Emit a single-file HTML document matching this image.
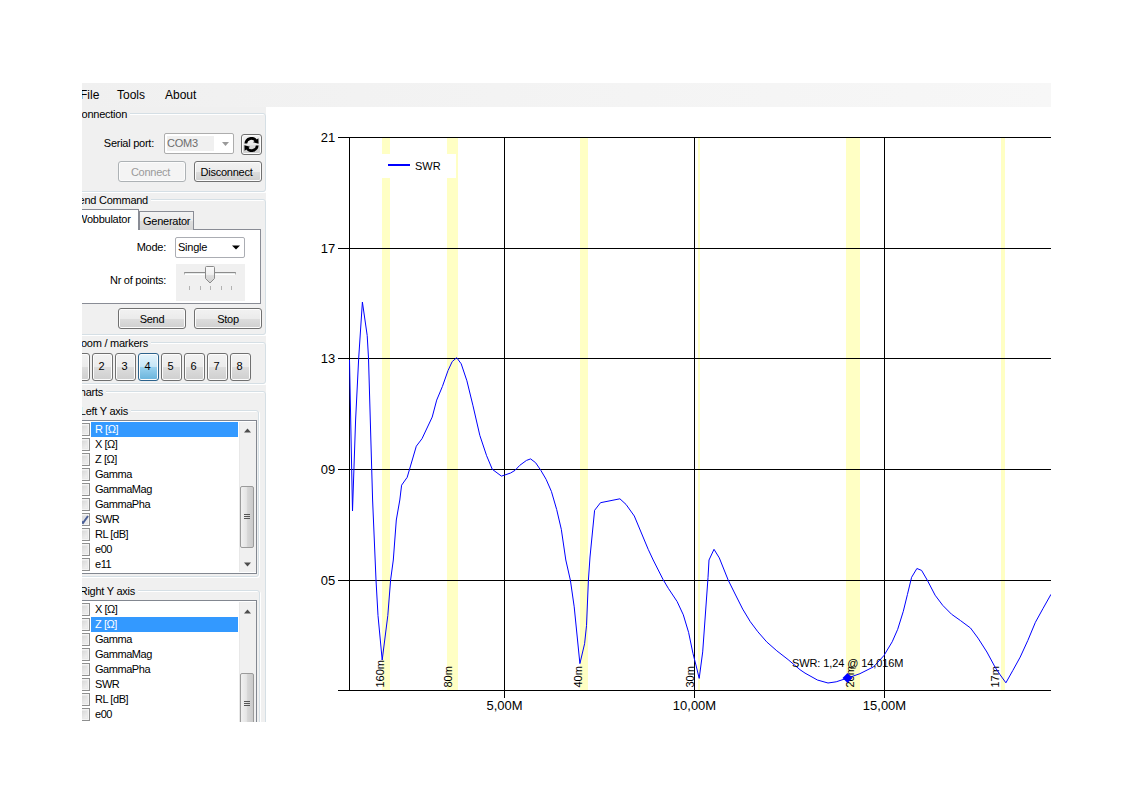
<!DOCTYPE html>
<html><head><meta charset="utf-8">
<style>
*{box-sizing:border-box;margin:0;padding:0}
html,body{width:1122px;height:793px;overflow:hidden;background:#fff;font-family:"Liberation Sans", sans-serif;color:#000}
.abs{position:absolute}
.chart{position:absolute;left:0;top:0}
#menu{position:absolute;left:82px;top:83px;width:969px;height:24px;background:linear-gradient(to right,#f0f0f0,#f7f7f7);overflow:hidden;font-size:12px}
#menu span{position:absolute;top:5px}
#panel{position:absolute;left:82px;top:107px;width:184px;height:615px;background:#f0f0f0;overflow:hidden}
#in{position:absolute;left:-82px;top:-107px;width:1122px;height:793px;font-size:11px;letter-spacing:-0.25px}
.t{position:absolute;white-space:nowrap;line-height:13px}
.r{text-align:right}
.gb{position:absolute;border:1px solid #d5dfe5;border-radius:3px;box-shadow:inset 1px 1px 0 #fff, 1px 1px 0 #fff}
.gl{position:absolute;background:#f0f0f0;padding:0 3px 0 0;white-space:nowrap;line-height:13px;text-align:right}
.btn{position:absolute;border:1px solid #707070;border-radius:3px;background:linear-gradient(#f2f2f2 0%,#ebebeb 50%,#dddddd 51%,#cfcfcf 100%);box-shadow:inset 0 0 0 1px #fcfcfc;text-align:center;line-height:18px}
.dis{border-color:#adb2b5;background:#f4f4f4;color:#9a9a9a}
.lb{position:absolute;background:#fff;border:1px solid #828790}
.row{position:absolute;left:0;height:15px;width:200px;line-height:15px}
.cb{position:absolute;width:13px;height:13px;border:1px solid #8e8f8f;background:linear-gradient(135deg,#cdcdcd,#f7f7f7);box-shadow:inset 0 0 0 1px #f4f4f4,inset 0 0 0 2px #e8e8e8}
.sel{background:#3399ff;color:#fff}
.zb{position:absolute;top:353px;width:21px;height:28px;border:1px solid #707070;border-radius:3px;background:linear-gradient(#f2f2f2 0%,#ebebeb 50%,#dddddd 51%,#cfcfcf 100%);box-shadow:inset 0 0 0 1px #fcfcfc;text-align:center;line-height:24px;font-size:11px;letter-spacing:0;padding-right:2px}
.zb.on{border-color:#2c628b;background:linear-gradient(#e5f4fc 0%,#c4e5f6 50%,#98d1ef 51%,#68b3db 100%)}
.sb{position:absolute;background:#f0f0f0;border-left:1px solid #e8e8e8}
</style></head><body>
<svg class="chart" width="1122" height="793" viewBox="0 0 1122 793">
<defs><clipPath id="pa"><rect x="349" y="137" width="702" height="553"/></clipPath></defs>
<rect x="382" y="137" width="8" height="553" fill="#ffffc4"/>
<rect x="447" y="137" width="11" height="553" fill="#ffffc4"/>
<rect x="580" y="137" width="8" height="553" fill="#ffffc4"/>
<rect x="698" y="137" width="2" height="553" fill="#ffffc4"/>
<rect x="846" y="137" width="14" height="553" fill="#ffffc4"/>
<rect x="1001" y="137" width="4" height="553" fill="#ffffc4"/>
<rect x="382" y="154" width="74" height="24" fill="#fff"/>
<rect x="388" y="164" width="22" height="2" fill="#0000ff"/>
<text x="415" y="169.5" font-family='"Liberation Sans", sans-serif' font-size="11" fill="#000">SWR</text>
<rect x="338" y="137" width="713" height="1" fill="#000"/>
<rect x="338" y="248" width="713" height="1" fill="#000"/>
<rect x="338" y="358" width="713" height="1" fill="#000"/>
<rect x="338" y="469" width="713" height="1" fill="#000"/>
<rect x="338" y="580" width="713" height="1" fill="#000"/>
<rect x="338" y="690" width="713" height="1" fill="#000"/>
<rect x="349" y="137" width="1" height="553" fill="#000"/>
<rect x="504" y="137" width="1" height="561" fill="#000"/>
<rect x="694" y="137" width="1" height="561" fill="#000"/>
<rect x="884" y="137" width="1" height="561" fill="#000"/>
<text x="335.3" y="141.5" text-anchor="end" font-family='"Liberation Sans", sans-serif' font-size="13" fill="#000">21</text>
<text x="335.3" y="252.5" text-anchor="end" font-family='"Liberation Sans", sans-serif' font-size="13" fill="#000">17</text>
<text x="335.3" y="362.5" text-anchor="end" font-family='"Liberation Sans", sans-serif' font-size="13" fill="#000">13</text>
<text x="335.3" y="473.5" text-anchor="end" font-family='"Liberation Sans", sans-serif' font-size="13" fill="#000">09</text>
<text x="335.3" y="584.5" text-anchor="end" font-family='"Liberation Sans", sans-serif' font-size="13" fill="#000">05</text>
<text x="504.5" y="710" text-anchor="middle" font-family='"Liberation Sans", sans-serif' font-size="13" fill="#000">5,00M</text>
<text x="694.5" y="710" text-anchor="middle" font-family='"Liberation Sans", sans-serif' font-size="13" fill="#000">10,00M</text>
<text x="884.5" y="710" text-anchor="middle" font-family='"Liberation Sans", sans-serif' font-size="13" fill="#000">15,00M</text>
<text transform="translate(384.2,687.5) rotate(-90)" font-family='"Liberation Sans", sans-serif' font-size="11" fill="#000">160m</text>
<text transform="translate(452.2,687.5) rotate(-90)" font-family='"Liberation Sans", sans-serif' font-size="11" fill="#000">80m</text>
<text transform="translate(582.2,687.5) rotate(-90)" font-family='"Liberation Sans", sans-serif' font-size="11" fill="#000">40m</text>
<text transform="translate(694.2,687.5) rotate(-90)" font-family='"Liberation Sans", sans-serif' font-size="11" fill="#000">30m</text>
<text transform="translate(854.2,687.5) rotate(-90)" font-family='"Liberation Sans", sans-serif' font-size="11" fill="#000">20m</text>
<text transform="translate(999.2,687.5) rotate(-90)" font-family='"Liberation Sans", sans-serif' font-size="11" fill="#000">17m</text>
<polyline clip-path="url(#pa)" points="349.5,360 352.5,511 355.6,420 358.7,358 362.4,302 367.2,335.5 368.5,358 372.6,500 376,580 378,615.6 382.2,660 387.8,615.6 390.6,580 393.3,560 396.3,520 399.8,500 401.6,485.2 407.2,477.3 416.3,446.2 422,438.7 432.2,417.1 436.7,400.1 442.4,386.5 448,370.6 452.2,361.6 456.7,357.7 461.2,363.8 466.9,380.8 473,405.8 479.8,435.3 486.6,455.7 492.3,469.3 501.4,476.1 504.5,475.1 510.6,473 515.1,470.3 519.7,465.4 526.5,460.4 530.6,458.9 535.6,462.7 540.8,470.3 546.1,479.3 551.4,491.4 556.7,509.6 561.3,529.3 565.8,560 570.4,580.3 574.2,606.8 579.9,663.6 584.6,643.7 586.5,625.7 588.4,580.3 590,557 594.6,510.3 600.5,502.7 619.9,498.8 626,504.4 634.3,516 648.2,549.3 653.2,560 663,579.4 668.3,588.3 677.1,601.5 683.3,614.8 688.6,632.4 693,653.6 696.2,666 699.2,678.4 702.7,651.9 708,577.7 709,560 714,549.3 719.3,557.9 728.2,580.1 735.1,594 742.7,609.1 750.3,621.7 757.9,631.8 766.7,641.9 776.8,650.8 788.1,659.6 800,669.7 805,673.1 817.4,680 828,683 836.2,681.8 847.4,678.1 859.9,673.7 873.6,666.8 883.9,655.6 892.2,641.8 897.7,629.3 903.3,611.3 907.4,594.6 911.6,577.3 916.9,568.5 921.6,570.4 927.3,580.2 935.1,595.2 942.7,605.3 951.5,614.2 960.4,620.5 970.5,628 978,638.1 986.9,652 995.1,667.2 1000.2,674.9 1005.9,682.8 1012.7,670.7 1020.2,657.1 1027.8,640.5 1035.4,622.3 1042.9,608.7 1051,594.3" fill="none" stroke="#0000ff" stroke-width="1" stroke-linejoin="miter"/>
<path d="M847.5 673 L852.5 678 L847.5 683 L842.5 678 Z" fill="#0000ff"/>
<text x="792" y="667" font-family='"Liberation Sans", sans-serif' font-size="11" letter-spacing="-0.1" fill="#000">SWR: 1,24 @ 14,016M</text>
</svg>
<div id="menu">
  <span style="left:-2px">File</span>
  <span style="left:35px">Tools</span>
  <span style="left:83px">About</span>
</div>
<div id="panel"><div id="in">
  <!-- Connection group -->
  <div class="gb" style="left:60px;top:113px;width:206px;height:79px"></div>
  <div class="gl" style="right:992px;top:108px">Connection</div>
  <div class="t r" style="left:90px;width:64px;top:137px">Serial port:</div>
  <div class="abs" style="left:164px;top:133px;width:70px;height:21px;border:1px solid #adadad;border-radius:2px;background:#fff"></div>
  <div class="abs" style="left:167px;top:136px;width:47px;height:15px;background:#f0f0f0"></div>
  <div class="t" style="left:167px;top:137px;color:#6d6d6d;font-size:11px">COM3</div>
  <svg class="abs" style="left:222px;top:141px" width="8" height="6"><path d="M0 1 L7 1 L3.5 5 Z" fill="#9a9a9a"/></svg>
  <div class="btn" style="left:241px;top:134px;width:21px;height:21px"></div>
  <svg class="abs" style="left:244px;top:137px" width="15" height="15" viewBox="0 0 15 15">
    <path d="M1.8 6.5 A5.6 5.6 0 0 1 12 3.8" fill="none" stroke="#000" stroke-width="2.8"/>
    <path d="M13.2 8.5 A5.6 5.6 0 0 1 3 11.2" fill="none" stroke="#000" stroke-width="2.8"/>
    <path d="M9 5.2 L14.6 6.8 L14.4 1.2 Z" fill="#000"/>
    <path d="M6 9.8 L0.4 8.2 L0.6 13.8 Z" fill="#000"/>
  </svg>
  <div class="btn dis" style="left:118px;top:161px;width:68px;height:21px;line-height:20px;padding-right:3px">Connect</div>
  <div class="btn" style="left:194px;top:161px;width:68px;height:21px;line-height:20px;padding-right:3px">Disconnect</div>

  <!-- Send Command group -->
  <div class="gb" style="left:60px;top:199px;width:206px;height:136px"></div>
  <div class="gl" style="right:971px;top:194px">Send Command</div>
  <div class="abs" style="left:60px;top:229px;width:201px;height:75px;border:1px solid #898c95;background:#fff"></div>
  <div class="abs" style="left:139px;top:211px;width:55px;height:19px;border:1px solid #898c95;border-bottom:none;background:linear-gradient(#f3f3f3,#ebebeb 50%,#dedede 51%,#d6d6d6)"></div>
  <div class="abs" style="left:60px;top:209px;width:79px;height:21px;border:1px solid #898c95;border-bottom:none;background:#fff"></div>
  <div class="t" style="left:77px;top:213px">Wobbulator</div>
  <div class="t" style="left:143px;top:215px">Generator</div>
  <div class="t r" style="left:100px;width:66px;top:241px">Mode:</div>
  <div class="abs" style="left:175px;top:237px;width:70px;height:21px;border:1px solid #abadb3;border-radius:2px;background:#fff"></div>
  <div class="t" style="left:178px;top:241px">Single</div>
  <svg class="abs" style="left:232px;top:245px" width="9" height="6"><path d="M0 0.5 L8 0.5 L4 4.5 Z" fill="#000"/></svg>
  <div class="t r" style="left:90px;width:76px;top:274px">Nr of points:</div>
  <div class="abs" style="left:176px;top:264px;width:69px;height:37px;background:#f0f0f0"></div>
  <div class="abs" style="left:184px;top:272px;width:52px;height:3px;border:1px solid #b0b0b0;border-top-color:#8c8c8c;border-bottom-color:#ffffff;background:#e7eaea"></div>
  <svg class="abs" style="left:205px;top:266px" width="10" height="18" viewBox="0 0 10 18"><path d="M0.5 1.5 Q0.5 0.5 1.5 0.5 L8.5 0.5 Q9.5 0.5 9.5 1.5 L9.5 12.5 L5 17 L0.5 12.5 Z" fill="url(#thg)" stroke="#8a8a8a"/><defs><linearGradient id="thg" x1="0" y1="0" x2="0" y2="1"><stop offset="0" stop-color="#fafafa"/><stop offset="0.5" stop-color="#eeeeee"/><stop offset="0.55" stop-color="#dcdcdc"/><stop offset="1" stop-color="#d0d0d0"/></linearGradient></defs></svg>
  <div class="abs" style="left:189px;top:286px;width:1px;height:4px;background:#b2b2b2"></div>
  <div class="abs" style="left:200px;top:286px;width:1px;height:4px;background:#b2b2b2"></div>
  <div class="abs" style="left:210px;top:286px;width:1px;height:4px;background:#b2b2b2"></div>
  <div class="abs" style="left:221px;top:286px;width:1px;height:4px;background:#b2b2b2"></div>
  <div class="abs" style="left:231px;top:286px;width:1px;height:4px;background:#b2b2b2"></div>
  <div class="btn" style="left:118px;top:308px;width:68px;height:21px;line-height:20px">Send</div>
  <div class="btn" style="left:194px;top:308px;width:68px;height:21px;line-height:20px">Stop</div>

  <!-- Zoom / markers -->
  <div class="gb" style="left:60px;top:342px;width:206px;height:42px"></div>
  <div class="gl" style="right:971px;top:337px">Zoom / markers</div>
  <div class="zb" style="left:69px"></div>
  <div class="zb" style="left:92px">2</div>
  <div class="zb" style="left:115px">3</div>
  <div class="zb on" style="left:138px">4</div>
  <div class="zb" style="left:161px">5</div>
  <div class="zb" style="left:184px">6</div>
  <div class="zb" style="left:207px">7</div>
  <div class="zb" style="left:230px">8</div>

  <!-- Charts group -->
  <div class="gb" style="left:60px;top:391px;width:206px;height:400px"></div>
  <div class="gl" style="right:1016px;top:386px">Charts</div>
  <div class="gb" style="left:60px;top:410px;width:199px;height:167px"></div>
  <div class="gl" style="right:991px;top:405px">Left Y axis</div>
  <div class="lb" style="left:60px;top:420px;width:197px;height:154px;overflow:hidden">
    <div class="abs" style="left:0;top:1px;width:178px;height:150px">
      <div class="cb" style="left:16px;top:1px"></div>
<div class="abs sel" style="left:30px;top:0px;width:147px;height:15px;line-height:15px;padding-left:4px;letter-spacing:-0.45px">R [&#937;]</div>
<div class="cb" style="left:16px;top:16px"></div>
<div class="abs" style="left:30px;top:15px;width:147px;height:15px;line-height:15px;padding-left:4px;letter-spacing:-0.45px">X [&#937;]</div>
<div class="cb" style="left:16px;top:31px"></div>
<div class="abs" style="left:30px;top:30px;width:147px;height:15px;line-height:15px;padding-left:4px;letter-spacing:-0.45px">Z [&#937;]</div>
<div class="cb" style="left:16px;top:46px"></div>
<div class="abs" style="left:30px;top:45px;width:147px;height:15px;line-height:15px;padding-left:4px;letter-spacing:-0.45px">Gamma</div>
<div class="cb" style="left:16px;top:61px"></div>
<div class="abs" style="left:30px;top:60px;width:147px;height:15px;line-height:15px;padding-left:4px;letter-spacing:-0.45px">GammaMag</div>
<div class="cb" style="left:16px;top:76px"></div>
<div class="abs" style="left:30px;top:75px;width:147px;height:15px;line-height:15px;padding-left:4px;letter-spacing:-0.45px">GammaPha</div>
<div class="cb" style="left:16px;top:91px"></div>
<svg class="abs" style="left:18px;top:93px" width="10" height="10"><path d="M1 5 L4 8 L9 1" fill="none" stroke="#4a5f97" stroke-width="2"/></svg>
<div class="abs" style="left:30px;top:90px;width:147px;height:15px;line-height:15px;padding-left:4px;letter-spacing:-0.45px">SWR</div>
<div class="cb" style="left:16px;top:106px"></div>
<div class="abs" style="left:30px;top:105px;width:147px;height:15px;line-height:15px;padding-left:4px;letter-spacing:-0.45px">RL [dB]</div>
<div class="cb" style="left:16px;top:121px"></div>
<div class="abs" style="left:30px;top:120px;width:147px;height:15px;line-height:15px;padding-left:4px;letter-spacing:-0.45px">e00</div>
<div class="cb" style="left:16px;top:136px"></div>
<div class="abs" style="left:30px;top:135px;width:147px;height:15px;line-height:15px;padding-left:4px;letter-spacing:-0.45px">e11</div>
    </div>
    <div class="sb" style="left:178px;top:1px;width:17px;height:150px">
      <svg class="abs" style="left:4px;top:6px" width="8" height="5"><path d="M0 4.5 L3.5 0.5 L7 4.5 Z" fill="#4d4d4d"/></svg>
      <div class="abs" style="left:0px;top:64px;width:14px;height:62px;border:1px solid #9b9b9b;border-radius:2px;background:linear-gradient(to right,#f1f1f1,#e5e5e5 45%,#d6d6d6 55%,#cacaca)"></div>
      <div class="abs" style="left:4px;top:92px;width:6px;height:1px;background:#555"></div>
      <div class="abs" style="left:4px;top:94px;width:6px;height:1px;background:#555"></div>
      <div class="abs" style="left:4px;top:96px;width:6px;height:1px;background:#555"></div>
      <svg class="abs" style="left:4px;top:139.5px" width="8" height="5"><path d="M0 0.5 L3.5 4.5 L7 0.5 Z" fill="#4d4d4d"/></svg>
    </div>
  </div>
  <div class="gb" style="left:60px;top:590px;width:200px;height:200px"></div>
  <div class="gl" style="right:984px;top:585px">Right Y axis</div>
  <div class="lb" style="left:60px;top:600px;width:197px;height:153px;overflow:hidden">
    <div class="abs" style="left:0;top:1px;width:178px;height:150px">
      <div class="cb" style="left:16px;top:1px"></div>
<div class="abs" style="left:30px;top:0px;width:147px;height:15px;line-height:15px;padding-left:4px;letter-spacing:-0.45px">X [&#937;]</div>
<div class="cb" style="left:16px;top:16px"></div>
<div class="abs sel" style="left:30px;top:15px;width:147px;height:15px;line-height:15px;padding-left:4px;letter-spacing:-0.45px">Z [&#937;]</div>
<div class="cb" style="left:16px;top:31px"></div>
<div class="abs" style="left:30px;top:30px;width:147px;height:15px;line-height:15px;padding-left:4px;letter-spacing:-0.45px">Gamma</div>
<div class="cb" style="left:16px;top:46px"></div>
<div class="abs" style="left:30px;top:45px;width:147px;height:15px;line-height:15px;padding-left:4px;letter-spacing:-0.45px">GammaMag</div>
<div class="cb" style="left:16px;top:61px"></div>
<div class="abs" style="left:30px;top:60px;width:147px;height:15px;line-height:15px;padding-left:4px;letter-spacing:-0.45px">GammaPha</div>
<div class="cb" style="left:16px;top:76px"></div>
<div class="abs" style="left:30px;top:75px;width:147px;height:15px;line-height:15px;padding-left:4px;letter-spacing:-0.45px">SWR</div>
<div class="cb" style="left:16px;top:91px"></div>
<div class="abs" style="left:30px;top:90px;width:147px;height:15px;line-height:15px;padding-left:4px;letter-spacing:-0.45px">RL [dB]</div>
<div class="cb" style="left:16px;top:106px"></div>
<div class="abs" style="left:30px;top:105px;width:147px;height:15px;line-height:15px;padding-left:4px;letter-spacing:-0.45px">e00</div>
<div class="cb" style="left:16px;top:121px"></div>
<div class="abs" style="left:30px;top:120px;width:147px;height:15px;line-height:15px;padding-left:4px;letter-spacing:-0.45px">e11</div>
<div class="cb" style="left:16px;top:136px"></div>
<div class="abs" style="left:30px;top:135px;width:147px;height:15px;line-height:15px;padding-left:4px;letter-spacing:-0.45px">e22</div>
    </div>
    <div class="sb" style="left:178px;top:1px;width:17px;height:150px">
      <svg class="abs" style="left:4px;top:6.5px" width="8" height="5"><path d="M0 4.5 L3.5 0.5 L7 4.5 Z" fill="#4d4d4d"/></svg>
      <div class="abs" style="left:0px;top:71px;width:14px;height:62px;border:1px solid #9b9b9b;border-radius:2px;background:linear-gradient(to right,#f1f1f1,#e5e5e5 45%,#d6d6d6 55%,#cacaca)"></div>
      <div class="abs" style="left:4px;top:99px;width:6px;height:1px;background:#555"></div>
      <div class="abs" style="left:4px;top:101px;width:6px;height:1px;background:#555"></div>
      <div class="abs" style="left:4px;top:103px;width:6px;height:1px;background:#555"></div>
    </div>
  </div>
</div></div>
</body></html>
